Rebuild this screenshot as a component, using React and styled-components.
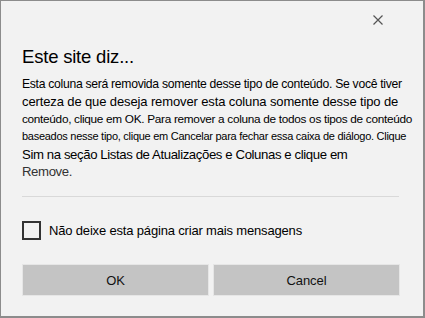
import React, { useState } from "react";
import styled, { createGlobalStyle } from "styled-components";

const GlobalStyle = createGlobalStyle`
  html, body {
    margin: 0;
    padding: 0;
    background: #f2f2f2;
  }
  * {
    box-sizing: border-box;
  }
`;

const Dialog = styled.div`
  width: 425px;
  height: 318px;
  background: #f2f2f2;
  border: 1px solid #8c8c8c;
  border-right-width: 2px;
  border-bottom-width: 2px;
  font-family: "Liberation Sans", Arial, sans-serif;
  color: #000;
  display: flex;
  flex-direction: column;
  padding: 0 23px 0 21px;
`;

const TopBar = styled.div`
  height: 37px;
  display: flex;
  justify-content: flex-end;
  align-items: center;
`;

const CloseButton = styled.button`
  width: 24px;
  height: 24px;
  margin-right: 10px;
  border: none;
  background: transparent;
  padding: 0;
  display: flex;
  align-items: center;
  justify-content: center;
  cursor: pointer;
`;

const Title = styled.h1`
  margin: 6px 0 0;
  font-size: 18.5px;
  font-weight: normal;
  line-height: 26px;
  letter-spacing: -0.2px;
`;

const Message = styled.div`
  margin-top: 6px;
  display: flex;
  flex-direction: column;
`;

const Line = styled.span`
  display: block;
  white-space: nowrap;
  height: 17.4px;
  line-height: 17.4px;
  font-size: ${(p) => p.size}px;
  letter-spacing: ${(p) => p.spacing || 0}px;
  color: ${(p) => p.tone || "#000"};
`;

const Divider = styled.hr`
  margin: 16px 1px 0 0;
  border: none;
  border-top: 1px solid #d9d9d9;
`;

const CheckRow = styled.label`
  margin-top: 24px;
  display: flex;
  align-items: center;
  gap: 8px;
  font-size: 13px;
  letter-spacing: -0.17px;
  cursor: pointer;
`;

const Box = styled.span`
  width: 19px;
  height: 19px;
  border: 2px solid #333;
  background: ${(p) => (p.checked ? "#0078d7" : "transparent")};
`;

const Buttons = styled.div`
  margin-top: 24px;
  display: grid;
  grid-template-columns: 1fr 1fr;
  gap: 4px;
`;

const Button = styled.button`
  height: 32px;
  border: 1px solid #e6e6e6;
  background: #c4c4c4;
  font-family: "Liberation Sans", Arial, sans-serif;
  font-size: 13px;
  color: #111;
  letter-spacing: -0.1px;
  cursor: pointer;
  padding: 0;

  &:hover {
    background: #b8b8b8;
  }
`;

const lines = [
  { text: "Esta coluna será removida somente desse tipo de conteúdo. Se você tiver", size: 12.2, spacing: -0.3 },
  { text: "certeza de que deseja remover esta coluna somente desse tipo de", size: 13, spacing: -0.12 },
  { text: "conteúdo, clique em OK. Para remover a coluna de todos os tipos de conteúdo", size: 11.8, spacing: -0.3 },
  { text: "baseados nesse tipo, clique em Cancelar para fechar essa caixa de diálogo. Clique", size: 11, spacing: -0.27 },
  { text: "Sim na seção Listas de Atualizações e Colunas e clique em", size: 13.2, spacing: -0.4 },
  { text: "Remove.", size: 13.2, spacing: -0.4, tone: "#333" },
];

const App = () => {
  const [checked, setChecked] = useState(false);

  return (
    <>
      <GlobalStyle />
      <Dialog>
        <TopBar>
          <CloseButton aria-label="Fechar">
            <svg width="10" height="10" viewBox="0 0 10 10">
              <path d="M0.5 0.5 L9.5 9.5 M9.5 0.5 L0.5 9.5" stroke="#555" strokeWidth="1.2" />
            </svg>
          </CloseButton>
        </TopBar>
        <Title>Este site diz...</Title>
        <Message>
          {lines.map((l, i) => (
            <Line key={i} size={l.size} spacing={l.spacing} tone={l.tone}>
              {l.text}
            </Line>
          ))}
        </Message>
        <Divider />
        <CheckRow onClick={() => setChecked(!checked)}>
          <Box checked={checked} />
          Não deixe esta página criar mais mensagens
        </CheckRow>
        <Buttons>
          <Button>OK</Button>
          <Button>Cancel</Button>
        </Buttons>
      </Dialog>
    </>
  );
};

export default App;
